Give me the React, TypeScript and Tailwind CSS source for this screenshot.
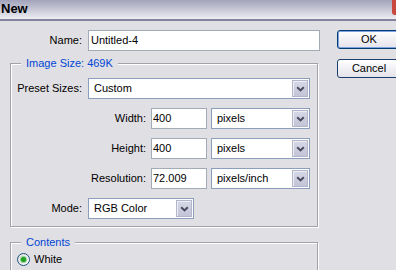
import React from "react";

function Chevron() {
  return (
    <svg width="9" height="6" viewBox="0 0 9 6">
      <path d="M1.2 1.2 L4.5 4.4 L7.8 1.2" fill="none" stroke="#4a4a5e" strokeWidth="2" />
    </svg>
  );
}

function Select({ value, w }: { value: string; w: string }) {
  return (
    <div className={`${w} h-[21px] flex border border-[#8b9fbd] bg-white p-px`}>
      <div className="flex-1 flex items-center pl-[4px] leading-[13px]">{value}</div>
      <div className="w-[16px] flex items-center justify-center border border-[#b3b6cb] bg-gradient-to-b from-[#d6d8e6] to-[#c3c5d7] shadow-[inset_1px_1px_0_#eceef5]">
        <Chevron />
      </div>
    </div>
  );
}

function Input({ value, w, pl }: { value: string; w: string; pl: string }) {
  return (
    <div className={`${w} h-[21px] flex items-center border border-[#a3abb6] bg-white ${pl} leading-[13px]`}>
      {value}
    </div>
  );
}

function Group({ legend, className, children }: { legend: string; className: string; children: React.ReactNode }) {
  return (
    <div className={`relative w-[308px] border border-[#a3a2a8] shadow-[inset_1px_1px_0_#ffffff,1px_1px_0_#ffffff] ${className}`}>
      <span className="absolute left-[10px] top-[-8px] px-[5px] bg-[#e0dfe3] text-[#0046d5] leading-[14px]">{legend}</span>
      {children}
    </div>
  );
}

export default function App() {
  return (
    <div className="w-[396px] h-[270px] overflow-hidden bg-[#e0dfe3] font-['Liberation_Sans',Arial,sans-serif] text-[11px] text-black">
      <div className="h-[21px] flex items-start bg-gradient-to-b from-[#a3a3bb] to-[#eeeef3] border-b-2 border-[#83839f]">
        <span className="pl-px pt-px text-[13px] font-bold leading-[15px]">New</span>
        <div className="ml-auto w-[4px] h-[15px] bg-[#c9473c] rounded-bl-[3px]" />
      </div>
      <div className="flex pt-[9px] pl-[10px]">
        <div className="w-[310px] flex flex-col">
          <div className="flex items-center h-[21px] gap-[6px]">
            <span className="w-[72px] text-right leading-[13px]">Name:</span>
            <Input value="Untitled-4" w="w-[232px]" pl="pl-[2px]" />
          </div>
          <Group legend="Image Size: 469K" className="mt-[12px] pt-[14px] pb-[7px] flex flex-col gap-[9px]">
            <div className="flex items-center gap-[6px]">
              <span className="w-[71px] text-right leading-[13px]">Preset Sizes:</span>
              <Select value="Custom" w="w-[222px]" />
            </div>
            <div className="flex items-center">
              <span className="w-[135px] text-right leading-[13px]">Width:</span>
              <div className="ml-[5px]"><Input value="400" w="w-[56px]" pl="pl-px" /></div>
              <div className="ml-[4px]"><Select value="pixels" w="w-[99px]" /></div>
            </div>
            <div className="flex items-center">
              <span className="w-[135px] text-right leading-[13px]">Height:</span>
              <div className="ml-[5px]"><Input value="400" w="w-[56px]" pl="pl-px" /></div>
              <div className="ml-[4px]"><Select value="pixels" w="w-[99px]" /></div>
            </div>
            <div className="flex items-center">
              <span className="w-[135px] text-right leading-[13px]">Resolution:</span>
              <div className="ml-[5px]"><Input value="72.009" w="w-[56px]" pl="pl-px" /></div>
              <div className="ml-[4px]"><Select value="pixels/inch" w="w-[99px]" /></div>
            </div>
            <div className="flex items-center gap-[6px]">
              <span className="w-[71px] text-right leading-[13px]">Mode:</span>
              <Select value="RGB Color" w="w-[106px]" />
            </div>
          </Group>
          <Group legend="Contents" className="mt-[15px] pt-[10px] pl-[6px] pb-[20px]">
            <div className="flex items-center gap-[4px] h-[13px]">
              <div className="w-[13px] h-[13px] rounded-full border border-[#1c5180] bg-gradient-to-br from-[#dcdcd6] to-[#ffffff] flex items-center justify-center">
                <div className="w-[5px] h-[5px] rounded-full bg-[#21a121] shadow-[0_0_0_1px_#8fd18f]" />
              </div>
              <span className="leading-[13px]">White</span>
            </div>
          </Group>
        </div>
        <div className="ml-[17px] flex flex-col gap-[10px]">
          <div className="w-[64px] h-[19px] shrink-0 flex items-center justify-center rounded-[3px] border border-[#003c74] bg-gradient-to-b from-[#ffffff] to-[#e3e3ea] shadow-[inset_0_0_0_1px_#7ea2e0] leading-[13px]">OK</div>
          <div className="w-[64px] h-[19px] shrink-0 flex items-center justify-center rounded-[3px] border border-[#1b3e6e] bg-gradient-to-b from-[#ffffff] to-[#e3e3ea] leading-[13px]">Cancel</div>
        </div>
      </div>
    </div>
  );
}
